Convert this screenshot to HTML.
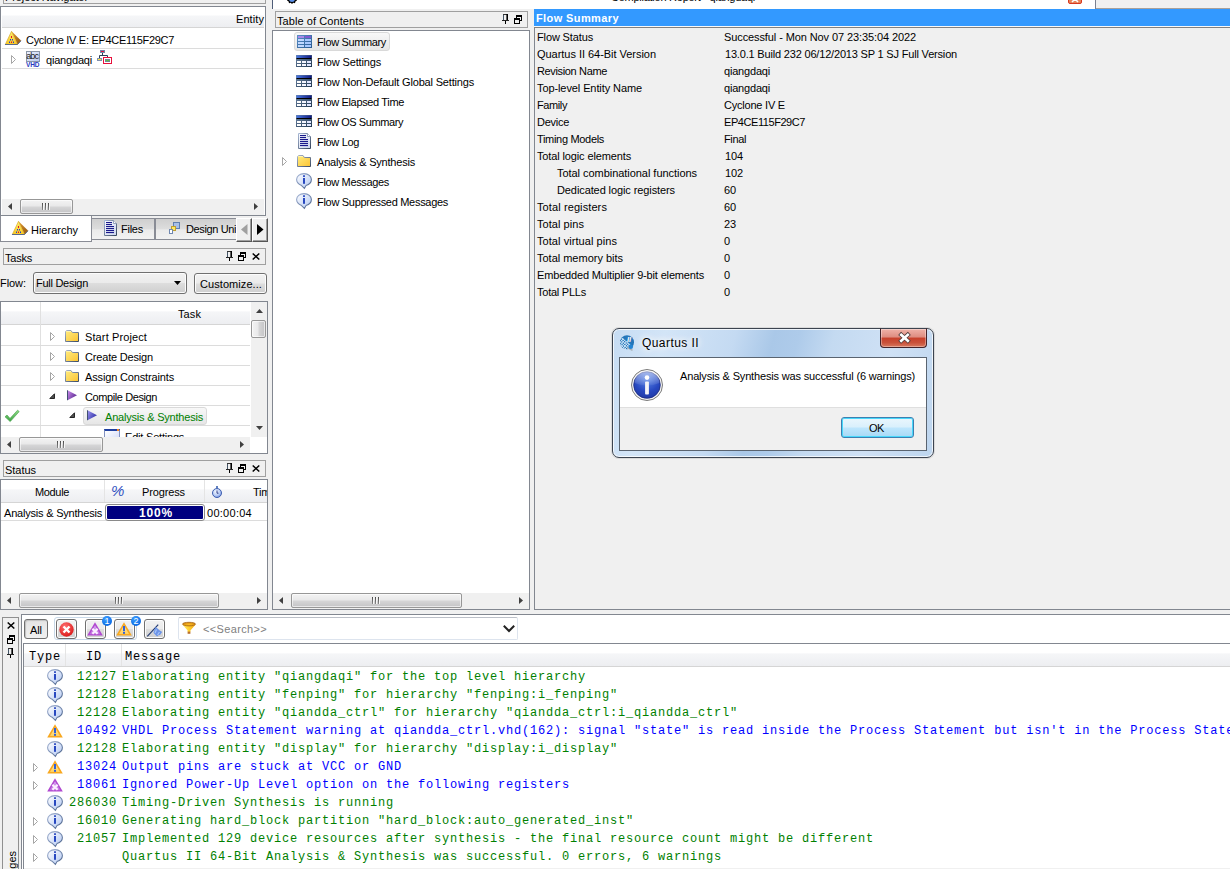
<!DOCTYPE html>
<html><head><meta charset="utf-8"><title>Quartus II</title>
<style>
*{box-sizing:border-box;margin:0;padding:0}
html,body{width:1230px;height:869px;overflow:hidden;background:#f0f0f0}
body{position:relative;font-family:"Liberation Sans",sans-serif;font-size:11px;color:#000;letter-spacing:-0.2px}
.a{position:absolute}
svg{position:absolute;overflow:visible}
.t{position:absolute;white-space:nowrap;line-height:14px;height:14px}
.frame{position:absolute;border:1px solid #828790;background:#fff}
.dock{position:absolute;border:1px solid #a0a0a0;background:#f0f0f0;height:17px}
.hl{position:absolute;height:1px;background:#dcdcdc}
.vl{position:absolute;width:1px;background:#dcdcdc}
.hdr{position:absolute;background:linear-gradient(#fff 0,#fff 40%,#f5f6f8 45%,#edeef1 100%);border-bottom:1px solid #d5d5d5}
.sb{position:absolute;background:#f0f0f0}
.thumb{position:absolute;border:1px solid #979797;border-radius:2px;background:linear-gradient(#f3f3f3 0,#e8e8e9 48%,#d6d6d7 52%,#c4c4c6 100%);box-shadow:inset 0 0 0 1px rgba(255,255,255,0.6)}
.thumbv{position:absolute;border:1px solid #979797;border-radius:2px;background:linear-gradient(90deg,#f3f3f3 0,#e8e8e9 48%,#d6d6d7 52%,#c4c4c6 100%);box-shadow:inset 0 0 0 1px rgba(255,255,255,0.6)}
.sel{position:absolute;border:1px solid #d9d9d9;border-radius:3px;background:linear-gradient(#f8f8f8,#e6e6e6)}
.mono{font-family:"Liberation Mono",monospace;font-size:12px;letter-spacing:0.8px;white-space:pre;position:absolute;line-height:16px;height:16px}
.g{color:#008000}.bl{color:#0000ff}
</style></head><body>
<div class="a" style="left:3px;top:-13px;width:263px;height:17px;border:1px solid #a0a0a0"></div>
<div class="t" style="left:5px;top:-10px;letter-spacing:-0.081px;">Project Navigator</div>
<div class="frame" style="left:0px;top:6px;width:266px;height:210px;"></div>
<div class="hdr" style="left:2px;top:7px;width:262px;height:21px;"></div>
<div class="t" style="left:236px;top:12px;letter-spacing:0.081px;">Entity</div>
<div class="hl" style="left:2px;top:48px;width:262px;height:1px;"></div>
<div class="hl" style="left:2px;top:68px;width:262px;height:1px;"></div>
<svg style="left:5px;top:31px" width="16" height="14" viewBox="0 0 16 14"><defs><linearGradient id="g1" x1="0" y1="0" x2="0" y2="1"><stop offset="0" stop-color="#fff070"/><stop offset="1" stop-color="#f8c820"/></linearGradient><linearGradient id="g2" x1="0" y1="0" x2="1" y2="1"><stop offset="0" stop-color="#e8a030"/><stop offset="1" stop-color="#8a5010"/></linearGradient></defs><path d="M6.5 0.3 L16 9.5 L12.5 13.5 Z" fill="url(#g2)"/><path d="M6.5 0.3 L12.5 13.5 H0.3 Z" fill="url(#g1)" stroke="#d0a020" stroke-width="0.6"/><path d="M0 13.5 H12.5 L16 9.8" stroke="#5a6a8a" stroke-width="1" fill="none"/><rect x="6" y="5" width="1" height="2" fill="#e01030"/><rect x="5" y="8" width="1" height="1.5" fill="#2040d0"/><rect x="7" y="8" width="1" height="1.5" fill="#2040d0"/><rect x="4" y="10.5" width="1" height="1.5" fill="#2040d0"/><rect x="6" y="10.5" width="1" height="1.5" fill="#e01030"/><rect x="8" y="10.5" width="1" height="1.5" fill="#2040d0"/></svg>
<div class="t" style="left:26px;top:33px;letter-spacing:-0.308px;">Cyclone IV E: EP4CE115F29C7</div>
<svg style="left:11px;top:55px" width="6" height="9" viewBox="0 0 6 9"><path d="M0.5 0.5 L4.5 4.5 L0.5 8.5 Z" fill="#fff" stroke="#a6a6a6" stroke-width="1"/></svg>
<svg style="left:26px;top:51px" width="14" height="16" viewBox="0 0 14 16"><defs><linearGradient id="g3" x1="0" y1="0" x2="1" y2="1"><stop offset="0" stop-color="#f0f4ff"/><stop offset="1" stop-color="#b8c8f0"/></linearGradient></defs><rect x="0.5" y="0.5" width="13" height="10" fill="url(#g3)" stroke="#8a96a8"/><text x="0.2" y="8.3" font-family="Liberation Sans,sans-serif" font-size="9" letter-spacing="-0.9" fill="#202020">abc</text><text x="0" y="15.8" font-family="Liberation Sans,sans-serif" font-size="6.5" font-weight="bold" letter-spacing="-0.2" fill="#2838c0">VHD</text></svg>
<div class="t" style="left:46px;top:53px;letter-spacing:-0.191px;">qiangdaqi</div>
<svg style="left:97px;top:50px" width="15" height="14" viewBox="0 0 15 14"><rect x="3" y="0" width="5" height="3" fill="#7088a8"/><rect x="4" y="1" width="3" height="1" fill="#e81040"/><path d="M5.5 3 V5.5 M2.5 8 V5.5 H10.5 V9" stroke="#2a4058" fill="none"/><rect x="0" y="8" width="5" height="3" fill="#8090b0"/><rect x="1" y="9" width="3" height="1" fill="#ffe840"/><rect x="6.5" y="7.5" width="8" height="6" fill="#fff" stroke="#e8103c"/><rect x="8" y="9" width="5" height="3" fill="#708898"/><rect x="9" y="10" width="3" height="1" fill="#60c040"/></svg>
<div class="sb" style="left:2px;top:199px;width:262px;height:16px;"></div>
<svg style="left:8px;top:203px" width="4" height="7" viewBox="0 0 4 7"><path d="M4 0 V7 L0 3.5 Z" fill="#404040"/></svg>
<svg style="left:254px;top:203px" width="4" height="7" viewBox="0 0 4 7"><path d="M0 0 V7 L4 3.5 Z" fill="#404040"/></svg>
<div class="thumb" style="left:20px;top:199px;width:53px;height:15px;"></div>
<div class="a" style="left:42px;top:203px;width:1px;height:7px;background:linear-gradient(#4a4a4a,#8a8a8a)"></div>
<div class="a" style="left:43px;top:203px;width:1px;height:7px;background:#f6f6f6"></div>
<div class="a" style="left:45px;top:203px;width:1px;height:7px;background:linear-gradient(#4a4a4a,#8a8a8a)"></div>
<div class="a" style="left:46px;top:203px;width:1px;height:7px;background:#f6f6f6"></div>
<div class="a" style="left:48px;top:203px;width:1px;height:7px;background:linear-gradient(#4a4a4a,#8a8a8a)"></div>
<div class="a" style="left:49px;top:203px;width:1px;height:7px;background:#f6f6f6"></div>
<div class="a" style="left:91px;top:218px;width:64px;height:22px;background:linear-gradient(#cfcfcf 0,#dddddd 50%,#ebebeb 54%,#f2f2f2 100%);border:1px solid #898c95"></div>
<div class="a" style="left:155px;top:218px;width:90px;height:22px;background:linear-gradient(#cfcfcf 0,#dddddd 50%,#ebebeb 54%,#f2f2f2 100%);border:1px solid #898c95;border-right:none"></div>
<div class="a" style="left:0px;top:216px;width:92px;height:26px;background:#fff;border:1px solid #898c95;border-top:none"></div>
<svg style="left:12px;top:221px" width="16" height="14" viewBox="0 0 16 14"><defs><linearGradient id="g4" x1="0" y1="0" x2="0" y2="1"><stop offset="0" stop-color="#fff070"/><stop offset="1" stop-color="#f8c820"/></linearGradient><linearGradient id="g5" x1="0" y1="0" x2="1" y2="1"><stop offset="0" stop-color="#e8a030"/><stop offset="1" stop-color="#8a5010"/></linearGradient></defs><path d="M6.5 0.3 L16 9.5 L12.5 13.5 Z" fill="url(#g5)"/><path d="M6.5 0.3 L12.5 13.5 H0.3 Z" fill="url(#g4)" stroke="#d0a020" stroke-width="0.6"/><path d="M0 13.5 H12.5 L16 9.8" stroke="#5a6a8a" stroke-width="1" fill="none"/><rect x="6" y="5" width="1" height="2" fill="#e01030"/><rect x="5" y="8" width="1" height="1.5" fill="#2040d0"/><rect x="7" y="8" width="1" height="1.5" fill="#2040d0"/><rect x="4" y="10.5" width="1" height="1.5" fill="#2040d0"/><rect x="6" y="10.5" width="1" height="1.5" fill="#e01030"/><rect x="8" y="10.5" width="1" height="1.5" fill="#2040d0"/></svg>
<div class="t" style="left:31px;top:223px;letter-spacing:-0.009px;">Hierarchy</div>
<svg style="left:104px;top:220px" width="13" height="16" viewBox="0 0 13 16"><defs><linearGradient id="g6" x1="0" y1="0" x2="1" y2="1"><stop offset="0" stop-color="#fafbff"/><stop offset="1" stop-color="#ccd6ee"/></linearGradient><linearGradient id="g7" x1="0" y1="0" x2="1" y2="1"><stop offset="0" stop-color="#a8b8d4"/><stop offset="1" stop-color="#34445c"/></linearGradient></defs><path d="M0.5 0.5 H9.5 L12.5 3.5 V15.5 H0.5 Z" fill="url(#g6)" stroke="url(#g7)" stroke-width="1"/><path d="M9.5 0.5 V3.5 H12.5" fill="#fff" stroke="#8090b0" stroke-width="0.8"/><rect x="2" y="2" width="6" height="1.1" fill="#1a1a8c"/><rect x="2" y="4" width="6" height="1.1" fill="#1a1a8c"/><rect x="2" y="6" width="8" height="1.1" fill="#1a1a8c"/><rect x="2" y="8" width="8" height="1.1" fill="#1a1a8c"/><rect x="2" y="10" width="8" height="1.1" fill="#1a1a8c"/><rect x="2" y="12" width="8" height="1.1" fill="#1a1a8c"/></svg>
<div class="t" style="left:121px;top:222px;letter-spacing:-0.247px;">Files</div>
<div class="t" style="left:186px;top:222px;letter-spacing:-0.381px;">Design Uni</div>
<svg style="left:169px;top:222px" width="11" height="12" viewBox="0 0 11 12"><rect x="4.5" y="0.5" width="6" height="6" fill="#a8c0e8" stroke="#6080b0"/><rect x="2.5" y="4.5" width="4" height="4" fill="#ffe860" stroke="#c0a030"/><rect x="0.5" y="7.5" width="3" height="4" fill="#fff" stroke="#7088b0"/></svg>
<div class="a" style="left:236px;top:218px;width:16px;height:24px;background:#f0f0f0;border-top:1px solid #fff;border-left:1px solid #fff;border-right:1px solid #555;border-bottom:1px solid #555;box-shadow:inset -1px -1px 0 #a0a0a0"></div>
<div class="a" style="left:252px;top:218px;width:16px;height:24px;background:#f0f0f0;border-top:1px solid #fff;border-left:1px solid #fff;border-right:1px solid #555;border-bottom:1px solid #555;box-shadow:inset -1px -1px 0 #a0a0a0"></div>
<svg style="left:241px;top:224px" width="7" height="11" viewBox="0 0 7 11"><path d="M6.5 0 V11 L0 5.5 Z" fill="#a0a0a0"/></svg>
<svg style="left:257px;top:224px" width="7" height="11" viewBox="0 0 7 11"><path d="M0 0 V11 L6.5 5.5 Z" fill="#000"/></svg>
<div class="dock" style="left:3px;top:248px;width:263px;height:17px;"></div>
<div class="t" style="left:5px;top:251px;letter-spacing:-0.225px;">Tasks</div>
<svg style="left:226px;top:251px" width="7" height="10" viewBox="0 0 7 10"><rect x="1" y="0" width="1" height="7" fill="#445566"/><rect x="1" y="0" width="5" height="1" fill="#333"/><rect x="4.4" y="0" width="1.6" height="7" fill="#000"/><rect x="0" y="6" width="7" height="1" fill="#222"/><rect x="3" y="7" width="1" height="3" fill="#000"/></svg>
<svg style="left:238px;top:252px" width="8" height="9" viewBox="0 0 8 9"><rect x="2.5" y="1" width="5" height="4.5" fill="none" stroke="#000"/><rect x="2" y="0" width="6" height="2" fill="#000"/><rect x="0.5" y="4" width="5" height="4.5" fill="#f0f0f0" stroke="#000"/><rect x="0" y="3" width="6" height="2" fill="#000"/></svg>
<svg style="left:252px;top:253px" width="8" height="7" viewBox="0 0 8 7"><path d="M0.7 0.5 L7.3 6.5 M7.3 0.5 L0.7 6.5" stroke="#000" stroke-width="1.5" fill="none"/></svg>
<div class="t" style="left:0px;top:276px;letter-spacing:-0.056px;">Flow:</div>
<div class="a" style="left:33px;top:272px;width:154px;height:22px;border:1px solid #707070;border-radius:3px;background:linear-gradient(#f2f2f2 0,#ebebeb 48%,#dddddd 52%,#cfcfcf 100%);box-shadow:inset 0 0 0 1px #fcfcfc"></div>
<div class="t" style="left:36px;top:276px;letter-spacing:-0.276px;">Full Design</div>
<svg style="left:174px;top:281px" width="7" height="4" viewBox="0 0 7 4"><path d="M0 0 H7 L3.5 4 Z" fill="#000"/></svg>
<div class="a" style="left:194px;top:273px;width:73px;height:21px;border:1px solid #707070;border-radius:3px;background:linear-gradient(#f2f2f2 0,#ebebeb 48%,#dddddd 52%,#cfcfcf 100%);box-shadow:inset 0 0 0 1px #fcfcfc"></div>
<div class="t" style="left:200px;top:277px;letter-spacing:0.072px;">Customize...</div>
<div class="frame" style="left:0px;top:301px;width:268px;height:153px;"></div>
<div class="hdr" style="left:1px;top:302px;width:249px;height:23px;"></div>
<div class="a" style="left:40px;top:302px;width:1px;height:135px;background:#e0e0e0"></div>
<div class="t" style="left:178px;top:307px;letter-spacing:0.094px;">Task</div>
<div class="sb" style="left:251px;top:302px;width:16px;height:135px;"></div>
<svg style="left:256px;top:309px" width="7" height="4" viewBox="0 0 7 4"><path d="M0 4 H7 L3.5 0 Z" fill="#404040"/></svg>
<svg style="left:256px;top:426px" width="7" height="4" viewBox="0 0 7 4"><path d="M0 0 H7 L3.5 4 Z" fill="#404040"/></svg>
<div class="thumbv" style="left:251px;top:320px;width:15px;height:18px;"></div>
<div class="hl" style="left:1px;top:345px;width:249px;height:1px;"></div>
<div class="t" style="left:85px;top:330px;letter-spacing:0.113px;">Start Project</div>
<svg style="left:65px;top:330px" width="14" height="12" viewBox="0 0 14 12"><defs><linearGradient id="g8" x1="0" y1="0" x2="1" y2="1"><stop offset="0" stop-color="#ffec80"/><stop offset="1" stop-color="#fcc434"/></linearGradient><linearGradient id="g9" x1="0" y1="0" x2="1" y2="1"><stop offset="0" stop-color="#a8b4cc"/><stop offset="1" stop-color="#3c4c64"/></linearGradient></defs><path d="M0.5 11.5 V1.6 L1.6 0.5 H6 L7.4 2.5 H13.5 V11.5 Z" fill="url(#g8)" stroke="url(#g9)" stroke-width="1"/><path d="M1.5 1.5 H6" stroke="#fff4b0" stroke-width="1"/></svg>
<svg style="left:50px;top:332px" width="6" height="9" viewBox="0 0 6 9"><path d="M0.5 0.5 L4.5 4.5 L0.5 8.5 Z" fill="#fff" stroke="#a6a6a6" stroke-width="1"/></svg>
<div class="hl" style="left:1px;top:365px;width:249px;height:1px;"></div>
<div class="t" style="left:85px;top:350px;letter-spacing:-0.179px;">Create Design</div>
<svg style="left:65px;top:350px" width="14" height="12" viewBox="0 0 14 12"><defs><linearGradient id="g10" x1="0" y1="0" x2="1" y2="1"><stop offset="0" stop-color="#ffec80"/><stop offset="1" stop-color="#fcc434"/></linearGradient><linearGradient id="g11" x1="0" y1="0" x2="1" y2="1"><stop offset="0" stop-color="#a8b4cc"/><stop offset="1" stop-color="#3c4c64"/></linearGradient></defs><path d="M0.5 11.5 V1.6 L1.6 0.5 H6 L7.4 2.5 H13.5 V11.5 Z" fill="url(#g10)" stroke="url(#g11)" stroke-width="1"/><path d="M1.5 1.5 H6" stroke="#fff4b0" stroke-width="1"/></svg>
<svg style="left:50px;top:352px" width="6" height="9" viewBox="0 0 6 9"><path d="M0.5 0.5 L4.5 4.5 L0.5 8.5 Z" fill="#fff" stroke="#a6a6a6" stroke-width="1"/></svg>
<div class="hl" style="left:1px;top:385px;width:249px;height:1px;"></div>
<div class="t" style="left:85px;top:370px;letter-spacing:-0.151px;">Assign Constraints</div>
<svg style="left:65px;top:370px" width="14" height="12" viewBox="0 0 14 12"><defs><linearGradient id="g12" x1="0" y1="0" x2="1" y2="1"><stop offset="0" stop-color="#ffec80"/><stop offset="1" stop-color="#fcc434"/></linearGradient><linearGradient id="g13" x1="0" y1="0" x2="1" y2="1"><stop offset="0" stop-color="#a8b4cc"/><stop offset="1" stop-color="#3c4c64"/></linearGradient></defs><path d="M0.5 11.5 V1.6 L1.6 0.5 H6 L7.4 2.5 H13.5 V11.5 Z" fill="url(#g12)" stroke="url(#g13)" stroke-width="1"/><path d="M1.5 1.5 H6" stroke="#fff4b0" stroke-width="1"/></svg>
<svg style="left:50px;top:372px" width="6" height="9" viewBox="0 0 6 9"><path d="M0.5 0.5 L4.5 4.5 L0.5 8.5 Z" fill="#fff" stroke="#a6a6a6" stroke-width="1"/></svg>
<div class="hl" style="left:1px;top:405px;width:249px;height:1px;"></div>
<div class="t" style="left:85px;top:390px;letter-spacing:-0.404px;">Compile Design</div>
<svg style="left:67px;top:390px" width="11" height="11" viewBox="0 0 11 11"><defs><linearGradient id="g14" x1="0" y1="0" x2="1" y2="0.6"><stop offset="0" stop-color="#d090f0"/><stop offset="1" stop-color="#5a2890"/></linearGradient></defs><path d="M0.5 0.3 L10 5.2 L0.5 10.2 Z" fill="url(#g14)"/><path d="M0.5 0.3 V10.2" stroke="#405070" stroke-width="1"/></svg>
<svg style="left:49px;top:393px" width="6" height="6" viewBox="0 0 6 6"><path d="M5.5 0.8 V5.5 H0.8 Z" fill="#505050" stroke="#262626" stroke-width="1"/></svg>
<div class="hl" style="left:1px;top:425px;width:249px;height:1px;"></div>
<div class="sel" style="left:83px;top:407px;width:124px;height:18px;"></div>
<svg style="left:69px;top:412px" width="6" height="6" viewBox="0 0 6 6"><path d="M5.5 0.8 V5.5 H0.8 Z" fill="#505050" stroke="#262626" stroke-width="1"/></svg>
<svg style="left:87px;top:410px" width="11" height="11" viewBox="0 0 11 11"><defs><linearGradient id="g15" x1="0" y1="0" x2="1" y2="0.6"><stop offset="0" stop-color="#a098f0"/><stop offset="1" stop-color="#3030a8"/></linearGradient></defs><path d="M0.5 0.3 L10 5.2 L0.5 10.2 Z" fill="url(#g15)"/><path d="M0.5 0.3 V10.2" stroke="#405070" stroke-width="1"/></svg>
<div class="t" style="left:105px;top:410px;color:#008000;letter-spacing:-0.205px;">Analysis &amp; Synthesis</div>
<svg style="left:4px;top:409px" width="17" height="14" viewBox="0 0 17 14"><defs><linearGradient id="g16" x1="0" y1="0" x2="0" y2="1"><stop offset="0" stop-color="#90dc88"/><stop offset="1" stop-color="#38a040"/></linearGradient></defs><path d="M1 7.8 L3 6 L6 9.4 L13.6 1.2 L15.2 2.6 L6.2 12.6 Z" fill="url(#g16)" stroke="#3c9c40" stroke-width="0.6"/></svg>
<div class="a" style="left:41px;top:426px;width:209px;height:11px;overflow:hidden">
<div class="a" style="left:63px;top:3px;width:16px;height:14px;border:1px solid #8090c0;border-top:2px solid #2040a0;background:linear-gradient(135deg,#fff,#d0d8f8)"></div>
<div class="a" style="left:76px;top:3px;width:2px;height:2px;background:#f08020"></div>
<div class="t" style="left:84px;top:4px">Edit Settings</div>
</div>
<div class="sb" style="left:1px;top:437px;width:249px;height:16px;"></div>
<svg style="left:7px;top:441px" width="4" height="7" viewBox="0 0 4 7"><path d="M4 0 V7 L0 3.5 Z" fill="#404040"/></svg>
<svg style="left:240px;top:441px" width="4" height="7" viewBox="0 0 4 7"><path d="M0 0 V7 L4 3.5 Z" fill="#404040"/></svg>
<div class="thumb" style="left:19px;top:437px;width:84px;height:15px;"></div>
<div class="a" style="left:57px;top:441px;width:1px;height:7px;background:linear-gradient(#4a4a4a,#8a8a8a)"></div>
<div class="a" style="left:58px;top:441px;width:1px;height:7px;background:#f6f6f6"></div>
<div class="a" style="left:60px;top:441px;width:1px;height:7px;background:linear-gradient(#4a4a4a,#8a8a8a)"></div>
<div class="a" style="left:61px;top:441px;width:1px;height:7px;background:#f6f6f6"></div>
<div class="a" style="left:63px;top:441px;width:1px;height:7px;background:linear-gradient(#4a4a4a,#8a8a8a)"></div>
<div class="a" style="left:64px;top:441px;width:1px;height:7px;background:#f6f6f6"></div>
<div class="dock" style="left:3px;top:460px;width:263px;height:17px;"></div>
<div class="t" style="left:5px;top:463px;letter-spacing:-0.031px;">Status</div>
<svg style="left:226px;top:463px" width="7" height="10" viewBox="0 0 7 10"><rect x="1" y="0" width="1" height="7" fill="#445566"/><rect x="1" y="0" width="5" height="1" fill="#333"/><rect x="4.4" y="0" width="1.6" height="7" fill="#000"/><rect x="0" y="6" width="7" height="1" fill="#222"/><rect x="3" y="7" width="1" height="3" fill="#000"/></svg>
<svg style="left:238px;top:464px" width="8" height="9" viewBox="0 0 8 9"><rect x="2.5" y="1" width="5" height="4.5" fill="none" stroke="#000"/><rect x="2" y="0" width="6" height="2" fill="#000"/><rect x="0.5" y="4" width="5" height="4.5" fill="#f0f0f0" stroke="#000"/><rect x="0" y="3" width="6" height="2" fill="#000"/></svg>
<svg style="left:252px;top:465px" width="8" height="7" viewBox="0 0 8 7"><path d="M0.7 0.5 L7.3 6.5 M7.3 0.5 L0.7 6.5" stroke="#000" stroke-width="1.5" fill="none"/></svg>
<div class="frame" style="left:0px;top:479px;width:268px;height:131px;"></div>
<div class="hdr" style="left:1px;top:480px;width:266px;height:23px;"></div>
<div class="a" style="left:104px;top:480px;width:1px;height:22px;background:#e4e4e4"></div>
<div class="a" style="left:204px;top:480px;width:1px;height:22px;background:#e4e4e4"></div>
<div class="t" style="left:35px;top:485px;letter-spacing:-0.346px;">Module</div>
<div class="t" style="left:111px;top:484px;color:#3050c0;font-style:italic;font-size:15px;letter-spacing:0;">%</div>
<div class="t" style="left:142px;top:485px;letter-spacing:-0.129px;">Progress</div>
<svg style="left:212px;top:486px" width="10" height="12" viewBox="0 0 10 12"><defs><radialGradient id="g17" cx="0.4" cy="0.35" r="0.7"><stop offset="0" stop-color="#f4f8ff"/><stop offset="0.6" stop-color="#b8ccf4"/><stop offset="1" stop-color="#6c8ce0"/></radialGradient></defs><rect x="4" y="0" width="2" height="2" fill="#6080c0"/><circle cx="5" cy="7" r="4.5" fill="url(#g17)" stroke="#4060b0"/><path d="M5 4.5 V7.2 H6.5" stroke="#203080" stroke-width="0.9" fill="none"/></svg>
<div class="a" style="left:250px;top:480px;width:17px;height:22px;overflow:hidden"><div class="t" style="left:3px;top:5px">Time</div></div>
<div class="hl" style="left:1px;top:520px;width:266px;height:1px;"></div>
<div class="t" style="left:4px;top:506px;letter-spacing:-0.205px;">Analysis &amp; Synthesis</div>
<div class="a" style="left:105px;top:504px;width:100px;height:17px;border:1px solid #8a8a8a;border-radius:3px;background:#fff"></div>
<div class="a" style="left:107px;top:506px;width:96px;height:13px;background:#000080;border-radius:1px"></div>
<div class="t" style="left:139px;top:506px;color:#fff;font-weight:bold;font-size:12px;letter-spacing:0.824px;">100%</div>
<div class="t" style="left:207px;top:506px;letter-spacing:0.271px;">00:00:04</div>
<div class="sb" style="left:1px;top:593px;width:266px;height:16px;"></div>
<svg style="left:7px;top:597px" width="4" height="7" viewBox="0 0 4 7"><path d="M4 0 V7 L0 3.5 Z" fill="#404040"/></svg>
<svg style="left:257px;top:597px" width="4" height="7" viewBox="0 0 4 7"><path d="M0 0 V7 L4 3.5 Z" fill="#404040"/></svg>
<div class="thumb" style="left:19px;top:593px;width:200px;height:15px;"></div>
<div class="a" style="left:115px;top:597px;width:1px;height:7px;background:linear-gradient(#4a4a4a,#8a8a8a)"></div>
<div class="a" style="left:116px;top:597px;width:1px;height:7px;background:#f6f6f6"></div>
<div class="a" style="left:118px;top:597px;width:1px;height:7px;background:linear-gradient(#4a4a4a,#8a8a8a)"></div>
<div class="a" style="left:119px;top:597px;width:1px;height:7px;background:#f6f6f6"></div>
<div class="a" style="left:121px;top:597px;width:1px;height:7px;background:linear-gradient(#4a4a4a,#8a8a8a)"></div>
<div class="a" style="left:122px;top:597px;width:1px;height:7px;background:#f6f6f6"></div>
<div class="a" style="left:272px;top:0px;width:824px;height:9px;background:#fff;border-left:1px solid #4f5d78;border-right:1px solid #7a8090"></div>
<div class="a" style="left:1096px;top:8px;width:134px;height:1px;background:#a8a09a"></div>
<div class="t" style="left:611px;top:-10px;letter-spacing:-0.255px;">Compilation Report - qiangdaqi</div>
<svg style="left:287px;top:-6px" width="10" height="10" viewBox="0 0 10 10"><path d="M5 0 L6.2 1.2 L8 0.8 L8.4 2.6 L10 3.4 L9.2 5 L10 6.6 L8.4 7.4 L8 9.2 L6.2 8.8 L5 10 L3.8 8.8 L2 9.2 L1.6 7.4 L0 6.6 L0.8 5 L0 3.4 L1.6 2.6 L2 0.8 L3.8 1.2 Z" fill="#000"/><circle cx="5" cy="5" r="3" fill="#5a90e8"/></svg>
<div class="a" style="left:1068px;top:-10px;width:14px;height:14px;background:#e8845a;border:1px solid #d83820;border-radius:2px"></div>
<svg style="left:1071px;top:-4px" width="8" height="6" viewBox="0 0 8 6"><path d="M1 0 L7 6 M7 0 L1 6" stroke="#fff" stroke-width="1.5"/></svg>
<div class="dock" style="left:275px;top:11px;width:253px;height:17px;"></div>
<div class="t" style="left:277px;top:14px;letter-spacing:0.081px;">Table of Contents</div>
<svg style="left:502px;top:14px" width="7" height="10" viewBox="0 0 7 10"><rect x="1" y="0" width="1" height="7" fill="#445566"/><rect x="1" y="0" width="5" height="1" fill="#333"/><rect x="4.4" y="0" width="1.6" height="7" fill="#000"/><rect x="0" y="6" width="7" height="1" fill="#222"/><rect x="3" y="7" width="1" height="3" fill="#000"/></svg>
<svg style="left:514px;top:15px" width="8" height="9" viewBox="0 0 8 9"><rect x="2.5" y="1" width="5" height="4.5" fill="none" stroke="#000"/><rect x="2" y="0" width="6" height="2" fill="#000"/><rect x="0.5" y="4" width="5" height="4.5" fill="#f0f0f0" stroke="#000"/><rect x="0" y="3" width="6" height="2" fill="#000"/></svg>
<div class="frame" style="left:272px;top:30px;width:258px;height:580px;"></div>
<div class="sel" style="left:294px;top:32px;width:96px;height:19px;"></div>
<div class="t" style="left:317px;top:35px;letter-spacing:-0.362px;">Flow Summary</div>
<svg style="left:297px;top:35px" width="15" height="13" viewBox="0 0 15 13"><defs><linearGradient id="g18" x1="0" y1="0" x2="1" y2="1"><stop offset="0" stop-color="#5a90c8"/><stop offset="1" stop-color="#2a5a90"/></linearGradient></defs><rect x="0" y="0" width="15" height="13" fill="url(#g18)"/><rect x="1" y="1" width="6" height="2" fill="#a888e8"/><rect x="8" y="1" width="6" height="2" fill="#8058d0"/><rect x="1" y="4" width="6" height="2" fill="#c0d8ff"/><rect x="8" y="4" width="6" height="2" fill="#a8c8ff"/><rect x="1" y="7" width="6" height="2" fill="#c0d8ff"/><rect x="8" y="7" width="6" height="2" fill="#a8c8ff"/><rect x="1" y="10" width="6" height="2" fill="#c0d8ff"/><rect x="8" y="10" width="6" height="2" fill="#a8c8ff"/></svg>
<div class="t" style="left:317px;top:55px;letter-spacing:-0.156px;">Flow Settings</div>
<svg style="left:296px;top:55px" width="16" height="12" viewBox="0 0 16 12"><defs><linearGradient id="g19" x1="0" y1="0" x2="1" y2="0"><stop offset="0" stop-color="#4a78e0"/><stop offset="1" stop-color="#101880"/></linearGradient><linearGradient id="g20" x1="0" y1="0" x2="1" y2="1"><stop offset="0" stop-color="#7088a8"/><stop offset="1" stop-color="#203850"/></linearGradient></defs><rect x="0" y="0" width="16" height="12" fill="url(#g20)"/><rect x="0.5" y="0.5" width="15" height="2.5" fill="url(#g19)"/><rect x="0.5" y="3" width="15" height="1" fill="#000"/><rect x="1" y="6" width="4" height="2" fill="#fff"/><rect x="6" y="6" width="4" height="2" fill="#f4f6ff"/><rect x="11" y="6" width="4" height="2" fill="#dfe6ff"/><rect x="1" y="9" width="4" height="2" fill="#fff"/><rect x="6" y="9" width="4" height="2" fill="#f4f6ff"/><rect x="11" y="9" width="4" height="2" fill="#dfe6ff"/></svg>
<div class="t" style="left:317px;top:75px;letter-spacing:-0.176px;">Flow Non-Default Global Settings</div>
<svg style="left:296px;top:75px" width="16" height="12" viewBox="0 0 16 12"><defs><linearGradient id="g21" x1="0" y1="0" x2="1" y2="0"><stop offset="0" stop-color="#4a78e0"/><stop offset="1" stop-color="#101880"/></linearGradient><linearGradient id="g22" x1="0" y1="0" x2="1" y2="1"><stop offset="0" stop-color="#7088a8"/><stop offset="1" stop-color="#203850"/></linearGradient></defs><rect x="0" y="0" width="16" height="12" fill="url(#g22)"/><rect x="0.5" y="0.5" width="15" height="2.5" fill="url(#g21)"/><rect x="0.5" y="3" width="15" height="1" fill="#000"/><rect x="1" y="6" width="4" height="2" fill="#fff"/><rect x="6" y="6" width="4" height="2" fill="#f4f6ff"/><rect x="11" y="6" width="4" height="2" fill="#dfe6ff"/><rect x="1" y="9" width="4" height="2" fill="#fff"/><rect x="6" y="9" width="4" height="2" fill="#f4f6ff"/><rect x="11" y="9" width="4" height="2" fill="#dfe6ff"/></svg>
<div class="t" style="left:317px;top:95px;letter-spacing:-0.349px;">Flow Elapsed Time</div>
<svg style="left:296px;top:95px" width="16" height="12" viewBox="0 0 16 12"><defs><linearGradient id="g23" x1="0" y1="0" x2="1" y2="0"><stop offset="0" stop-color="#4a78e0"/><stop offset="1" stop-color="#101880"/></linearGradient><linearGradient id="g24" x1="0" y1="0" x2="1" y2="1"><stop offset="0" stop-color="#7088a8"/><stop offset="1" stop-color="#203850"/></linearGradient></defs><rect x="0" y="0" width="16" height="12" fill="url(#g24)"/><rect x="0.5" y="0.5" width="15" height="2.5" fill="url(#g23)"/><rect x="0.5" y="3" width="15" height="1" fill="#000"/><rect x="1" y="6" width="4" height="2" fill="#fff"/><rect x="6" y="6" width="4" height="2" fill="#f4f6ff"/><rect x="11" y="6" width="4" height="2" fill="#dfe6ff"/><rect x="1" y="9" width="4" height="2" fill="#fff"/><rect x="6" y="9" width="4" height="2" fill="#f4f6ff"/><rect x="11" y="9" width="4" height="2" fill="#dfe6ff"/></svg>
<div class="t" style="left:317px;top:115px;letter-spacing:-0.420px;">Flow OS Summary</div>
<svg style="left:296px;top:115px" width="16" height="12" viewBox="0 0 16 12"><defs><linearGradient id="g25" x1="0" y1="0" x2="1" y2="0"><stop offset="0" stop-color="#4a78e0"/><stop offset="1" stop-color="#101880"/></linearGradient><linearGradient id="g26" x1="0" y1="0" x2="1" y2="1"><stop offset="0" stop-color="#7088a8"/><stop offset="1" stop-color="#203850"/></linearGradient></defs><rect x="0" y="0" width="16" height="12" fill="url(#g26)"/><rect x="0.5" y="0.5" width="15" height="2.5" fill="url(#g25)"/><rect x="0.5" y="3" width="15" height="1" fill="#000"/><rect x="1" y="6" width="4" height="2" fill="#fff"/><rect x="6" y="6" width="4" height="2" fill="#f4f6ff"/><rect x="11" y="6" width="4" height="2" fill="#dfe6ff"/><rect x="1" y="9" width="4" height="2" fill="#fff"/><rect x="6" y="9" width="4" height="2" fill="#f4f6ff"/><rect x="11" y="9" width="4" height="2" fill="#dfe6ff"/></svg>
<div class="t" style="left:317px;top:135px;letter-spacing:-0.330px;">Flow Log</div>
<svg style="left:298px;top:133px" width="13" height="16" viewBox="0 0 13 16"><defs><linearGradient id="g27" x1="0" y1="0" x2="1" y2="1"><stop offset="0" stop-color="#fafbff"/><stop offset="1" stop-color="#ccd6ee"/></linearGradient><linearGradient id="g28" x1="0" y1="0" x2="1" y2="1"><stop offset="0" stop-color="#a8b8d4"/><stop offset="1" stop-color="#34445c"/></linearGradient></defs><path d="M0.5 0.5 H9.5 L12.5 3.5 V15.5 H0.5 Z" fill="url(#g27)" stroke="url(#g28)" stroke-width="1"/><path d="M9.5 0.5 V3.5 H12.5" fill="#fff" stroke="#8090b0" stroke-width="0.8"/><rect x="2" y="2" width="6" height="1.1" fill="#1a1a8c"/><rect x="2" y="4" width="6" height="1.1" fill="#1a1a8c"/><rect x="2" y="6" width="8" height="1.1" fill="#1a1a8c"/><rect x="2" y="8" width="8" height="1.1" fill="#1a1a8c"/><rect x="2" y="10" width="8" height="1.1" fill="#1a1a8c"/><rect x="2" y="12" width="8" height="1.1" fill="#1a1a8c"/></svg>
<div class="t" style="left:317px;top:155px;letter-spacing:-0.205px;">Analysis &amp; Synthesis</div>
<svg style="left:297px;top:155px" width="14" height="12" viewBox="0 0 14 12"><defs><linearGradient id="g29" x1="0" y1="0" x2="1" y2="1"><stop offset="0" stop-color="#ffec80"/><stop offset="1" stop-color="#fcc434"/></linearGradient><linearGradient id="g30" x1="0" y1="0" x2="1" y2="1"><stop offset="0" stop-color="#a8b4cc"/><stop offset="1" stop-color="#3c4c64"/></linearGradient></defs><path d="M0.5 11.5 V1.6 L1.6 0.5 H6 L7.4 2.5 H13.5 V11.5 Z" fill="url(#g29)" stroke="url(#g30)" stroke-width="1"/><path d="M1.5 1.5 H6" stroke="#fff4b0" stroke-width="1"/></svg>
<svg style="left:282px;top:157px" width="6" height="9" viewBox="0 0 6 9"><path d="M0.5 0.5 L4.5 4.5 L0.5 8.5 Z" fill="#fff" stroke="#a6a6a6" stroke-width="1"/></svg>
<div class="t" style="left:317px;top:175px;letter-spacing:-0.340px;">Flow Messages</div>
<svg style="left:296px;top:173px" width="16" height="16" viewBox="0 0 16 16"><defs><linearGradient id="g31" x1="0" y1="0" x2="1" y2="1"><stop offset="0" stop-color="#ffffff"/><stop offset="1" stop-color="#b0c6f2"/></linearGradient><linearGradient id="g32" x1="0" y1="0" x2="1" y2="1"><stop offset="0" stop-color="#a8b8d8"/><stop offset="1" stop-color="#486088"/></linearGradient></defs><path d="M8 0.6 C3.6 0.6 0.6 3.2 0.6 6.6 C0.6 9.4 2.8 11.4 5.6 12.6 L8.4 15.4 L10 12.6 C13 11.6 15.4 9.6 15.4 6.6 C15.4 3.2 12.4 0.6 8 0.6 Z" fill="url(#g31)" stroke="url(#g32)" stroke-width="1.1"/><rect x="7" y="2.3" width="2" height="1.6" fill="#2848c0"/><rect x="7" y="5" width="2" height="5.8" fill="#2848c0"/></svg>
<div class="t" style="left:317px;top:195px;letter-spacing:-0.299px;">Flow Suppressed Messages</div>
<svg style="left:296px;top:193px" width="16" height="16" viewBox="0 0 16 16"><defs><linearGradient id="g33" x1="0" y1="0" x2="1" y2="1"><stop offset="0" stop-color="#ffffff"/><stop offset="1" stop-color="#b0c6f2"/></linearGradient><linearGradient id="g34" x1="0" y1="0" x2="1" y2="1"><stop offset="0" stop-color="#a8b8d8"/><stop offset="1" stop-color="#486088"/></linearGradient></defs><path d="M8 0.6 C3.6 0.6 0.6 3.2 0.6 6.6 C0.6 9.4 2.8 11.4 5.6 12.6 L8.4 15.4 L10 12.6 C13 11.6 15.4 9.6 15.4 6.6 C15.4 3.2 12.4 0.6 8 0.6 Z" fill="url(#g33)" stroke="url(#g34)" stroke-width="1.1"/><rect x="7" y="2.3" width="2" height="1.6" fill="#2848c0"/><rect x="7" y="5" width="2" height="5.8" fill="#2848c0"/></svg>
<div class="sb" style="left:273px;top:593px;width:256px;height:16px;"></div>
<svg style="left:279px;top:597px" width="4" height="7" viewBox="0 0 4 7"><path d="M4 0 V7 L0 3.5 Z" fill="#404040"/></svg>
<svg style="left:519px;top:597px" width="4" height="7" viewBox="0 0 4 7"><path d="M0 0 V7 L4 3.5 Z" fill="#404040"/></svg>
<div class="thumb" style="left:291px;top:593px;width:171px;height:15px;"></div>
<div class="a" style="left:372px;top:597px;width:1px;height:7px;background:linear-gradient(#4a4a4a,#8a8a8a)"></div>
<div class="a" style="left:373px;top:597px;width:1px;height:7px;background:#f6f6f6"></div>
<div class="a" style="left:375px;top:597px;width:1px;height:7px;background:linear-gradient(#4a4a4a,#8a8a8a)"></div>
<div class="a" style="left:376px;top:597px;width:1px;height:7px;background:#f6f6f6"></div>
<div class="a" style="left:378px;top:597px;width:1px;height:7px;background:linear-gradient(#4a4a4a,#8a8a8a)"></div>
<div class="a" style="left:379px;top:597px;width:1px;height:7px;background:#f6f6f6"></div>
<div class="a" style="left:534px;top:9px;width:696px;height:17px;background:#3399ff"></div>
<div class="t" style="left:536px;top:11px;color:#fff;font-weight:bold;letter-spacing:0.396px;">Flow Summary</div>
<div class="a" style="left:534px;top:26px;width:700px;height:584px;border:1px solid #828790;border-top:none"></div>
<div class="a" style="left:534px;top:26px;width:696px;height:1px;background:#f8f8f8"></div>
<div class="a" style="left:534px;top:27px;width:696px;height:1px;background:#808080"></div>
<div class="t" style="left:537px;top:30px;letter-spacing:-0.134px;">Flow Status</div>
<div class="t" style="left:724px;top:30px;letter-spacing:-0.100px;">Successful - Mon Nov 07 23:35:04 2022</div>
<div class="t" style="left:537px;top:47px;letter-spacing:-0.034px;">Quartus II 64-Bit Version</div>
<div class="t" style="left:725px;top:47px;letter-spacing:-0.182px;">13.0.1 Build 232 06/12/2013 SP 1 SJ Full Version</div>
<div class="t" style="left:537px;top:64px;letter-spacing:-0.353px;">Revision Name</div>
<div class="t" style="left:724px;top:64px;letter-spacing:-0.191px;">qiangdaqi</div>
<div class="t" style="left:537px;top:81px;letter-spacing:-0.095px;">Top-level Entity Name</div>
<div class="t" style="left:724px;top:81px;letter-spacing:-0.191px;">qiangdaqi</div>
<div class="t" style="left:537px;top:98px;letter-spacing:-0.398px;">Family</div>
<div class="t" style="left:724px;top:98px;letter-spacing:-0.216px;">Cyclone IV E</div>
<div class="t" style="left:537px;top:115px;letter-spacing:-0.271px;">Device</div>
<div class="t" style="left:724px;top:115px;letter-spacing:-0.433px;">EP4CE115F29C7</div>
<div class="t" style="left:537px;top:132px;letter-spacing:-0.317px;">Timing Models</div>
<div class="t" style="left:724px;top:132px;letter-spacing:-0.369px;">Final</div>
<div class="t" style="left:537px;top:149px;letter-spacing:-0.130px;">Total logic elements</div>
<div class="t" style="left:725px;top:149px;letter-spacing:-0.120px;">104</div>
<div class="t" style="left:557px;top:166px;letter-spacing:-0.043px;">Total combinational functions</div>
<div class="t" style="left:725px;top:166px;letter-spacing:-0.120px;">102</div>
<div class="t" style="left:557px;top:183px;letter-spacing:-0.098px;">Dedicated logic registers</div>
<div class="t" style="left:724px;top:183px;letter-spacing:-0.125px;">60</div>
<div class="t" style="left:537px;top:200px;letter-spacing:0.101px;">Total registers</div>
<div class="t" style="left:724px;top:200px;letter-spacing:-0.125px;">60</div>
<div class="t" style="left:537px;top:217px;letter-spacing:0.052px;">Total pins</div>
<div class="t" style="left:724px;top:217px;letter-spacing:-0.125px;">23</div>
<div class="t" style="left:537px;top:234px;letter-spacing:0.062px;">Total virtual pins</div>
<div class="t" style="left:724px;top:234px;">0</div>
<div class="t" style="left:537px;top:251px;letter-spacing:-0.012px;">Total memory bits</div>
<div class="t" style="left:724px;top:251px;">0</div>
<div class="t" style="left:537px;top:268px;letter-spacing:-0.159px;">Embedded Multiplier 9-bit elements</div>
<div class="t" style="left:724px;top:268px;">0</div>
<div class="t" style="left:537px;top:285px;letter-spacing:-0.237px;">Total PLLs</div>
<div class="t" style="left:724px;top:285px;">0</div>
<div class="a" style="left:2px;top:617px;width:17px;height:270px;border:1px solid #909090"></div>
<svg style="left:7px;top:622px" width="8" height="7" viewBox="0 0 8 7"><path d="M0.7 0.5 L7.3 6.5 M7.3 0.5 L0.7 6.5" stroke="#000" stroke-width="1.5" fill="none"/></svg>
<svg style="left:7px;top:635px" width="8" height="9" viewBox="0 0 8 9"><rect x="2.5" y="1" width="5" height="4.5" fill="none" stroke="#000"/><rect x="2" y="0" width="6" height="2" fill="#000"/><rect x="0.5" y="4" width="5" height="4.5" fill="#f0f0f0" stroke="#000"/><rect x="0" y="3" width="6" height="2" fill="#000"/></svg>
<svg style="left:7px;top:648px" width="7" height="10" viewBox="0 0 7 10"><rect x="1" y="0" width="1" height="7" fill="#445566"/><rect x="1" y="0" width="5" height="1" fill="#333"/><rect x="4.4" y="0" width="1.6" height="7" fill="#000"/><rect x="0" y="6" width="7" height="1" fill="#222"/><rect x="3" y="7" width="1" height="3" fill="#000"/></svg>
<div class="t" style="left:5px;top:851px;transform-origin:0 0;transform:rotate(-90deg) translate(-100%,0);letter-spacing:0">Messages</div>
<div class="a" style="left:21px;top:614px;width:1215px;height:260px;border:1px solid #828790;background:#fff"></div>
<div class="a" style="left:24px;top:619px;width:24px;height:20px;border:1px solid #707070;border-radius:3px;background:linear-gradient(#e4e4e4,#f0f0f0);box-shadow:inset 1px 1px 1px #c0c0c0"></div>
<div class="t" style="left:30px;top:623px;letter-spacing:-0.078px;">All</div>
<div class="a" style="left:54px;top:617px;width:83px;height:23px;border:1px solid #c8d8e8;border-radius:3px"></div>
<div class="a" style="left:56px;top:619px;width:21px;height:20px;border:1px solid #707070;border-radius:3px;background:linear-gradient(#f2f2f2 0,#ebebeb 48%,#dddddd 52%,#cfcfcf 100%);box-shadow:inset 0 0 0 1px #fcfcfc"></div>
<div class="a" style="left:85px;top:619px;width:21px;height:20px;border:1px solid #707070;border-radius:3px;background:linear-gradient(#f2f2f2 0,#ebebeb 48%,#dddddd 52%,#cfcfcf 100%);box-shadow:inset 0 0 0 1px #fcfcfc"></div>
<div class="a" style="left:114px;top:619px;width:21px;height:20px;border:1px solid #707070;border-radius:3px;background:linear-gradient(#f2f2f2 0,#ebebeb 48%,#dddddd 52%,#cfcfcf 100%);box-shadow:inset 0 0 0 1px #fcfcfc"></div>
<div class="a" style="left:144px;top:619px;width:21px;height:20px;border:1px solid #707070;border-radius:3px;background:linear-gradient(#f2f2f2 0,#ebebeb 48%,#dddddd 52%,#cfcfcf 100%);box-shadow:inset 0 0 0 1px #fcfcfc"></div>
<svg style="left:59px;top:622px" width="15" height="15" viewBox="0 0 15 15"><defs><radialGradient id="g35" cx="0.4" cy="0.3" r="0.8"><stop offset="0" stop-color="#ff7070"/><stop offset="1" stop-color="#d81010"/></radialGradient></defs><circle cx="7.5" cy="7.5" r="7.2" fill="url(#g35)"/><path d="M4.5 4.5 L10.5 10.5 M10.5 4.5 L4.5 10.5" stroke="#fff" stroke-width="2.4"/></svg>
<svg style="left:87px;top:622px" width="16" height="14" viewBox="0 0 16 14"><defs><linearGradient id="g36" x1="0" y1="0" x2="0" y2="1"><stop offset="0" stop-color="#d8a8f0"/><stop offset="1" stop-color="#c070e0"/></linearGradient></defs><path d="M8 0.3 L15.8 13.6 H0.2 Z" fill="#b048d0"/><path d="M8 3.2 L13.3 12.3 H2.7 Z" fill="url(#g36)"/><path d="M5.4 6.8 L10.6 11.8 M10.6 6.8 L5.4 11.8" stroke="#fbf0ff" stroke-width="2.2"/></svg>
<svg style="left:116px;top:622px" width="16" height="14" viewBox="0 0 16 14"><defs><linearGradient id="g37" x1="0" y1="0" x2="0" y2="1"><stop offset="0" stop-color="#ffeaa8"/><stop offset="1" stop-color="#ffd060"/></linearGradient></defs><path d="M8 0.3 L15.8 13.6 H0.2 Z" fill="#f8a820"/><path d="M8 3.4 L13 12 H3 Z" fill="url(#g37)"/><rect x="7" y="4" width="2" height="5.2" fill="#3060d8"/><rect x="7" y="10" width="2" height="1.8" fill="#3060d8"/></svg>
<svg style="left:102px;top:616px" width="10" height="10" viewBox="0 0 10 10"><defs><radialGradient id="g38" cx="0.4" cy="0.3" r="0.8"><stop offset="0" stop-color="#40a0ff"/><stop offset="1" stop-color="#0060e0"/></radialGradient></defs><circle cx="5" cy="5" r="5" fill="url(#g38)"/><text x="5" y="8.2" text-anchor="middle" font-family="Liberation Sans,sans-serif" font-size="9" fill="#fff">1</text></svg>
<svg style="left:131px;top:616px" width="10" height="10" viewBox="0 0 10 10"><defs><radialGradient id="g39" cx="0.4" cy="0.3" r="0.8"><stop offset="0" stop-color="#40a0ff"/><stop offset="1" stop-color="#0060e0"/></radialGradient></defs><circle cx="5" cy="5" r="5" fill="url(#g39)"/><text x="5" y="8.2" text-anchor="middle" font-family="Liberation Sans,sans-serif" font-size="9" fill="#fff">2</text></svg>
<svg style="left:147px;top:622px" width="16" height="16" viewBox="0 0 16 16"><path d="M0.3 14.3 L11.2 2.6" stroke="#203870" stroke-width="1.1"/><path d="M8.6 5 C10 6.6 10.6 6 11.6 7.4 C12.6 8.8 13.6 8.4 15.2 10 L12.8 13.2 C11.8 12.4 11.2 13.4 10.2 14.6 C9 13.2 7.6 12.4 6.4 10.4 Z" fill="#6c94e8"/><path d="M9.5 7.5 L8 11 M12.5 10 L10.5 13" stroke="#a8c4f8" stroke-width="1.2"/></svg>
<div class="a" style="left:178px;top:617px;width:340px;height:23px;background:#fff;border:1px solid #dde4ee;border-top-color:#bcc0c8;border-radius:2px"></div>
<svg style="left:182px;top:622px" width="14" height="12" viewBox="0 0 14 12"><defs><linearGradient id="g40" x1="0" y1="0" x2="1" y2="0"><stop offset="0" stop-color="#fff070"/><stop offset="0.5" stop-color="#ffd030"/><stop offset="1" stop-color="#f0a010"/></linearGradient><radialGradient id="g41" cx="0.5" cy="0.6" r="0.6"><stop offset="0" stop-color="#ffc020"/><stop offset="1" stop-color="#d08010"/></radialGradient></defs><path d="M0.4 2.4 L5.6 8.6 V10 H8.4 V8.6 L13.6 2.4 Z" fill="url(#g40)"/><ellipse cx="7" cy="2.1" rx="6.5" ry="1.8" fill="url(#g41)" stroke="#a86818" stroke-width="0.8"/><rect x="5.6" y="9.6" width="2.8" height="2.2" fill="#b87030"/></svg>
<div class="t" style="left:203px;top:622px;color:#808080;letter-spacing:0.344px;">&lt;&lt;Search&gt;&gt;</div>
<svg style="left:503px;top:625px" width="12" height="7" viewBox="0 0 12 7"><path d="M0.8 0.8 L6 6 L11.2 0.8" stroke="#222" stroke-width="2" fill="none"/></svg>
<div class="frame" style="left:23px;top:643px;width:1215px;height:230px;"></div>
<div class="hdr" style="left:24px;top:644px;width:1206px;height:23px;"></div>
<div class="a" style="left:65px;top:644px;width:1px;height:22px;background:#e4e4e4"></div>
<div class="a" style="left:121px;top:644px;width:1px;height:22px;background:#e4e4e4"></div>
<div class="mono " style="left:29px;top:649px">Type</div>
<div class="mono " style="left:86px;top:649px">ID</div>
<div class="mono " style="left:125px;top:649px">Message</div>
<svg style="left:47px;top:669px" width="16" height="16" viewBox="0 0 16 16"><defs><linearGradient id="g42" x1="0" y1="0" x2="1" y2="1"><stop offset="0" stop-color="#ffffff"/><stop offset="1" stop-color="#b0c6f2"/></linearGradient><linearGradient id="g43" x1="0" y1="0" x2="1" y2="1"><stop offset="0" stop-color="#a8b8d8"/><stop offset="1" stop-color="#486088"/></linearGradient></defs><path d="M8 0.6 C3.6 0.6 0.6 3.2 0.6 6.6 C0.6 9.4 2.8 11.4 5.6 12.6 L8.4 15.4 L10 12.6 C13 11.6 15.4 9.6 15.4 6.6 C15.4 3.2 12.4 0.6 8 0.6 Z" fill="url(#g42)" stroke="url(#g43)" stroke-width="1.1"/><rect x="7" y="2.3" width="2" height="1.6" fill="#2848c0"/><rect x="7" y="5" width="2" height="5.8" fill="#2848c0"/></svg>
<div class="mono g" style="left:77px;top:669px">12127</div>
<div class="mono g" style="left:122px;top:669px">Elaborating entity &quot;qiangdaqi&quot; for the top level hierarchy</div>
<svg style="left:47px;top:687px" width="16" height="16" viewBox="0 0 16 16"><defs><linearGradient id="g44" x1="0" y1="0" x2="1" y2="1"><stop offset="0" stop-color="#ffffff"/><stop offset="1" stop-color="#b0c6f2"/></linearGradient><linearGradient id="g45" x1="0" y1="0" x2="1" y2="1"><stop offset="0" stop-color="#a8b8d8"/><stop offset="1" stop-color="#486088"/></linearGradient></defs><path d="M8 0.6 C3.6 0.6 0.6 3.2 0.6 6.6 C0.6 9.4 2.8 11.4 5.6 12.6 L8.4 15.4 L10 12.6 C13 11.6 15.4 9.6 15.4 6.6 C15.4 3.2 12.4 0.6 8 0.6 Z" fill="url(#g44)" stroke="url(#g45)" stroke-width="1.1"/><rect x="7" y="2.3" width="2" height="1.6" fill="#2848c0"/><rect x="7" y="5" width="2" height="5.8" fill="#2848c0"/></svg>
<div class="mono g" style="left:77px;top:687px">12128</div>
<div class="mono g" style="left:122px;top:687px">Elaborating entity &quot;fenping&quot; for hierarchy &quot;fenping:i_fenping&quot;</div>
<svg style="left:47px;top:705px" width="16" height="16" viewBox="0 0 16 16"><defs><linearGradient id="g46" x1="0" y1="0" x2="1" y2="1"><stop offset="0" stop-color="#ffffff"/><stop offset="1" stop-color="#b0c6f2"/></linearGradient><linearGradient id="g47" x1="0" y1="0" x2="1" y2="1"><stop offset="0" stop-color="#a8b8d8"/><stop offset="1" stop-color="#486088"/></linearGradient></defs><path d="M8 0.6 C3.6 0.6 0.6 3.2 0.6 6.6 C0.6 9.4 2.8 11.4 5.6 12.6 L8.4 15.4 L10 12.6 C13 11.6 15.4 9.6 15.4 6.6 C15.4 3.2 12.4 0.6 8 0.6 Z" fill="url(#g46)" stroke="url(#g47)" stroke-width="1.1"/><rect x="7" y="2.3" width="2" height="1.6" fill="#2848c0"/><rect x="7" y="5" width="2" height="5.8" fill="#2848c0"/></svg>
<div class="mono g" style="left:77px;top:705px">12128</div>
<div class="mono g" style="left:122px;top:705px">Elaborating entity &quot;qiandda_ctrl&quot; for hierarchy &quot;qiandda_ctrl:i_qiandda_ctrl&quot;</div>
<svg style="left:47px;top:724px" width="16" height="14" viewBox="0 0 16 14"><defs><linearGradient id="g48" x1="0" y1="0" x2="0" y2="1"><stop offset="0" stop-color="#ffeaa8"/><stop offset="1" stop-color="#ffd060"/></linearGradient></defs><path d="M8 0.3 L15.8 13.6 H0.2 Z" fill="#f8a820"/><path d="M8 3.4 L13 12 H3 Z" fill="url(#g48)"/><rect x="7" y="4" width="2" height="5.2" fill="#3060d8"/><rect x="7" y="10" width="2" height="1.8" fill="#3060d8"/></svg>
<div class="mono bl" style="left:77px;top:723px">10492</div>
<div class="mono bl" style="left:122px;top:723px">VHDL Process Statement warning at qiandda_ctrl.vhd(162): signal &quot;state&quot; is read inside the Process Statement but isn&#x27;t in the Process Statement&#x27;s sensitivity list</div>
<svg style="left:47px;top:741px" width="16" height="16" viewBox="0 0 16 16"><defs><linearGradient id="g49" x1="0" y1="0" x2="1" y2="1"><stop offset="0" stop-color="#ffffff"/><stop offset="1" stop-color="#b0c6f2"/></linearGradient><linearGradient id="g50" x1="0" y1="0" x2="1" y2="1"><stop offset="0" stop-color="#a8b8d8"/><stop offset="1" stop-color="#486088"/></linearGradient></defs><path d="M8 0.6 C3.6 0.6 0.6 3.2 0.6 6.6 C0.6 9.4 2.8 11.4 5.6 12.6 L8.4 15.4 L10 12.6 C13 11.6 15.4 9.6 15.4 6.6 C15.4 3.2 12.4 0.6 8 0.6 Z" fill="url(#g49)" stroke="url(#g50)" stroke-width="1.1"/><rect x="7" y="2.3" width="2" height="1.6" fill="#2848c0"/><rect x="7" y="5" width="2" height="5.8" fill="#2848c0"/></svg>
<div class="mono g" style="left:77px;top:741px">12128</div>
<div class="mono g" style="left:122px;top:741px">Elaborating entity &quot;display&quot; for hierarchy &quot;display:i_display&quot;</div>
<svg style="left:33px;top:763px" width="6" height="9" viewBox="0 0 6 9"><path d="M0.5 0.5 L4.5 4.5 L0.5 8.5 Z" fill="#fff" stroke="#a6a6a6" stroke-width="1"/></svg>
<svg style="left:47px;top:760px" width="16" height="14" viewBox="0 0 16 14"><defs><linearGradient id="g51" x1="0" y1="0" x2="0" y2="1"><stop offset="0" stop-color="#ffeaa8"/><stop offset="1" stop-color="#ffd060"/></linearGradient></defs><path d="M8 0.3 L15.8 13.6 H0.2 Z" fill="#f8a820"/><path d="M8 3.4 L13 12 H3 Z" fill="url(#g51)"/><rect x="7" y="4" width="2" height="5.2" fill="#3060d8"/><rect x="7" y="10" width="2" height="1.8" fill="#3060d8"/></svg>
<div class="mono bl" style="left:77px;top:759px">13024</div>
<div class="mono bl" style="left:122px;top:759px">Output pins are stuck at VCC or GND</div>
<svg style="left:33px;top:781px" width="6" height="9" viewBox="0 0 6 9"><path d="M0.5 0.5 L4.5 4.5 L0.5 8.5 Z" fill="#fff" stroke="#a6a6a6" stroke-width="1"/></svg>
<svg style="left:47px;top:778px" width="16" height="14" viewBox="0 0 16 14"><defs><linearGradient id="g52" x1="0" y1="0" x2="0" y2="1"><stop offset="0" stop-color="#d8a8f0"/><stop offset="1" stop-color="#c070e0"/></linearGradient></defs><path d="M8 0.3 L15.8 13.6 H0.2 Z" fill="#b048d0"/><path d="M8 3.2 L13.3 12.3 H2.7 Z" fill="url(#g52)"/><path d="M5.4 6.8 L10.6 11.8 M10.6 6.8 L5.4 11.8" stroke="#fbf0ff" stroke-width="2.2"/></svg>
<div class="mono bl" style="left:77px;top:777px">18061</div>
<div class="mono bl" style="left:122px;top:777px">Ignored Power-Up Level option on the following registers</div>
<svg style="left:47px;top:795px" width="16" height="16" viewBox="0 0 16 16"><defs><linearGradient id="g53" x1="0" y1="0" x2="1" y2="1"><stop offset="0" stop-color="#ffffff"/><stop offset="1" stop-color="#b0c6f2"/></linearGradient><linearGradient id="g54" x1="0" y1="0" x2="1" y2="1"><stop offset="0" stop-color="#a8b8d8"/><stop offset="1" stop-color="#486088"/></linearGradient></defs><path d="M8 0.6 C3.6 0.6 0.6 3.2 0.6 6.6 C0.6 9.4 2.8 11.4 5.6 12.6 L8.4 15.4 L10 12.6 C13 11.6 15.4 9.6 15.4 6.6 C15.4 3.2 12.4 0.6 8 0.6 Z" fill="url(#g53)" stroke="url(#g54)" stroke-width="1.1"/><rect x="7" y="2.3" width="2" height="1.6" fill="#2848c0"/><rect x="7" y="5" width="2" height="5.8" fill="#2848c0"/></svg>
<div class="mono g" style="left:69px;top:795px">286030</div>
<div class="mono g" style="left:122px;top:795px">Timing-Driven Synthesis is running</div>
<svg style="left:33px;top:817px" width="6" height="9" viewBox="0 0 6 9"><path d="M0.5 0.5 L4.5 4.5 L0.5 8.5 Z" fill="#fff" stroke="#a6a6a6" stroke-width="1"/></svg>
<svg style="left:47px;top:813px" width="16" height="16" viewBox="0 0 16 16"><defs><linearGradient id="g55" x1="0" y1="0" x2="1" y2="1"><stop offset="0" stop-color="#ffffff"/><stop offset="1" stop-color="#b0c6f2"/></linearGradient><linearGradient id="g56" x1="0" y1="0" x2="1" y2="1"><stop offset="0" stop-color="#a8b8d8"/><stop offset="1" stop-color="#486088"/></linearGradient></defs><path d="M8 0.6 C3.6 0.6 0.6 3.2 0.6 6.6 C0.6 9.4 2.8 11.4 5.6 12.6 L8.4 15.4 L10 12.6 C13 11.6 15.4 9.6 15.4 6.6 C15.4 3.2 12.4 0.6 8 0.6 Z" fill="url(#g55)" stroke="url(#g56)" stroke-width="1.1"/><rect x="7" y="2.3" width="2" height="1.6" fill="#2848c0"/><rect x="7" y="5" width="2" height="5.8" fill="#2848c0"/></svg>
<div class="mono g" style="left:77px;top:813px">16010</div>
<div class="mono g" style="left:122px;top:813px">Generating hard_block partition &quot;hard_block:auto_generated_inst&quot;</div>
<svg style="left:33px;top:835px" width="6" height="9" viewBox="0 0 6 9"><path d="M0.5 0.5 L4.5 4.5 L0.5 8.5 Z" fill="#fff" stroke="#a6a6a6" stroke-width="1"/></svg>
<svg style="left:47px;top:831px" width="16" height="16" viewBox="0 0 16 16"><defs><linearGradient id="g57" x1="0" y1="0" x2="1" y2="1"><stop offset="0" stop-color="#ffffff"/><stop offset="1" stop-color="#b0c6f2"/></linearGradient><linearGradient id="g58" x1="0" y1="0" x2="1" y2="1"><stop offset="0" stop-color="#a8b8d8"/><stop offset="1" stop-color="#486088"/></linearGradient></defs><path d="M8 0.6 C3.6 0.6 0.6 3.2 0.6 6.6 C0.6 9.4 2.8 11.4 5.6 12.6 L8.4 15.4 L10 12.6 C13 11.6 15.4 9.6 15.4 6.6 C15.4 3.2 12.4 0.6 8 0.6 Z" fill="url(#g57)" stroke="url(#g58)" stroke-width="1.1"/><rect x="7" y="2.3" width="2" height="1.6" fill="#2848c0"/><rect x="7" y="5" width="2" height="5.8" fill="#2848c0"/></svg>
<div class="mono g" style="left:77px;top:831px">21057</div>
<div class="mono g" style="left:122px;top:831px">Implemented 129 device resources after synthesis - the final resource count might be different</div>
<svg style="left:33px;top:853px" width="6" height="9" viewBox="0 0 6 9"><path d="M0.5 0.5 L4.5 4.5 L0.5 8.5 Z" fill="#fff" stroke="#a6a6a6" stroke-width="1"/></svg>
<svg style="left:47px;top:849px" width="16" height="16" viewBox="0 0 16 16"><defs><linearGradient id="g59" x1="0" y1="0" x2="1" y2="1"><stop offset="0" stop-color="#ffffff"/><stop offset="1" stop-color="#b0c6f2"/></linearGradient><linearGradient id="g60" x1="0" y1="0" x2="1" y2="1"><stop offset="0" stop-color="#a8b8d8"/><stop offset="1" stop-color="#486088"/></linearGradient></defs><path d="M8 0.6 C3.6 0.6 0.6 3.2 0.6 6.6 C0.6 9.4 2.8 11.4 5.6 12.6 L8.4 15.4 L10 12.6 C13 11.6 15.4 9.6 15.4 6.6 C15.4 3.2 12.4 0.6 8 0.6 Z" fill="url(#g59)" stroke="url(#g60)" stroke-width="1.1"/><rect x="7" y="2.3" width="2" height="1.6" fill="#2848c0"/><rect x="7" y="5" width="2" height="5.8" fill="#2848c0"/></svg>
<div class="mono g" style="left:122px;top:849px">Quartus II 64-Bit Analysis &amp; Synthesis was successful. 0 errors, 6 warnings</div>
<div class="a" style="left:24px;top:868px;width:1206px;height:1px;background:#f0f0f0"></div>
<div class="a" style="left:612px;top:328px;width:322px;height:130px;border:1px solid #3c4450;border-radius:7px;background:linear-gradient(105deg,#c6dcf3 0%,#d3e5f7 15%,#c4daf2 35%,#aac8e8 46%,#aecbea 53%,#c4daf1 63%,#cfe1f5 80%,#bdd5ee 100%);box-shadow:inset 0 0 0 1px rgba(255,255,255,0.75), 0 0 0 1px rgba(150,150,150,0.25)"></div>
<div class="a" style="left:619px;top:357px;width:308px;height:94px;background:#f0f0f0;border:1px solid #5a6470"></div>
<div class="a" style="left:620px;top:358px;width:306px;height:49px;background:#fff"></div>
<div class="a" style="left:620px;top:407px;width:306px;height:1px;background:#dfdfdf"></div>
<svg style="left:620px;top:335px" width="15" height="16" viewBox="0 0 15 16"><defs><radialGradient id="g61" cx="0.6" cy="0.3" r="0.9"><stop offset="0" stop-color="#2a7cc0"/><stop offset="1" stop-color="#1a6cb0"/></radialGradient><clipPath id="g61c"><circle cx="7" cy="7.2" r="7"/></clipPath></defs><circle cx="7" cy="7.2" r="7" fill="url(#g61)"/><g clip-path="url(#g61c)"><g transform="rotate(40 7 7)" stroke="#d8ecfa" stroke-width="0.9" opacity="0.95"><path d="M-3 7.3 H17 M-3 9.3 H17 M-3 11.3 H17 M-3 13.3 H17"/><path d="M0 6.8 V16 M2 6.8 V16 M4 6.8 V16 M6 6.8 V16 M8 6.8 V16 M10 6.8 V16 M12 6.8 V16"/></g></g><text x="7" y="6.8" font-family="Liberation Sans,sans-serif" font-size="7.5" font-weight="bold" font-style="italic" fill="#fff">II</text><path d="M7.5 12.5 L12.5 15.3" stroke="#a8b0b8" stroke-width="1.5"/><circle cx="10.8" cy="11.8" r="2.3" fill="#2284d4"/></svg>
<div class="t" style="left:642px;top:335px;font-size:12px;line-height:16px;height:16px;text-shadow:0 0 5px #fff,0 0 8px #fff,0 0 10px #fff;letter-spacing:0.431px;">Quartus II</div>
<div class="a" style="left:880px;top:328px;width:47px;height:20px;border:1px solid #43242a;border-top:1px solid #3c4450;border-radius:0 0 4px 4px;background:linear-gradient(#f0b2a8 0,#de8d80 45%,#c8412b 50%,#c9513a 75%,#d8795f 100%);box-shadow:inset 0 0 0 1px rgba(255,255,255,0.35)"></div>
<svg style="left:899px;top:333px" width="11" height="10" viewBox="0 0 11 10"><path d="M2.2 1.8 L8.8 7.8 M8.8 1.8 L2.2 7.8" stroke="#4a3838" stroke-width="4.2" stroke-linecap="square"/><path d="M2.2 1.8 L8.8 7.8 M8.8 1.8 L2.2 7.8" stroke="#fff" stroke-width="2.7" stroke-linecap="square"/></svg>
<svg style="left:631px;top:369px" width="32" height="32" viewBox="0 0 32 32"><defs><radialGradient id="g62" cx="0.5" cy="0.25" r="0.9"><stop offset="0" stop-color="#5f8ae8"/><stop offset="0.55" stop-color="#2748c0"/><stop offset="1" stop-color="#1a2f98"/></radialGradient><linearGradient id="g63" x1="0" y1="0" x2="0" y2="1"><stop offset="0" stop-color="#fff" stop-opacity="0.55"/><stop offset="1" stop-color="#fff" stop-opacity="0.05"/></linearGradient></defs><circle cx="16" cy="16" r="15.5" fill="#f4f4f4" stroke="#7a7a7a" stroke-width="1"/><circle cx="16" cy="16" r="13.3" fill="url(#g62)" stroke="#1c2c80" stroke-width="0.8"/><path d="M3.5 14 A12.5 12.5 0 0 1 28.5 14 Q16 19 3.5 14 Z" fill="url(#g63)"/><circle cx="16" cy="8.6" r="2.3" fill="#fff"/><rect x="14.1" y="12.5" width="3.8" height="13" rx="0.8" fill="#f4f4f8"/></svg>
<div class="t" style="left:680px;top:369px;letter-spacing:-0.161px;">Analysis &amp; Synthesis was successful (6 warnings)</div>
<div class="a" style="left:841px;top:417px;width:73px;height:21px;border:1px solid #3c7fb1;border-radius:3px;background:linear-gradient(#eaf6fd 0,#d9f0fc 48%,#bee6fd 52%,#a7d9f5 100%);box-shadow:inset 0 0 0 1px #48d8fb"></div>
<div class="t" style="left:869px;top:421px;letter-spacing:-0.453px;">OK</div>
</body></html>
